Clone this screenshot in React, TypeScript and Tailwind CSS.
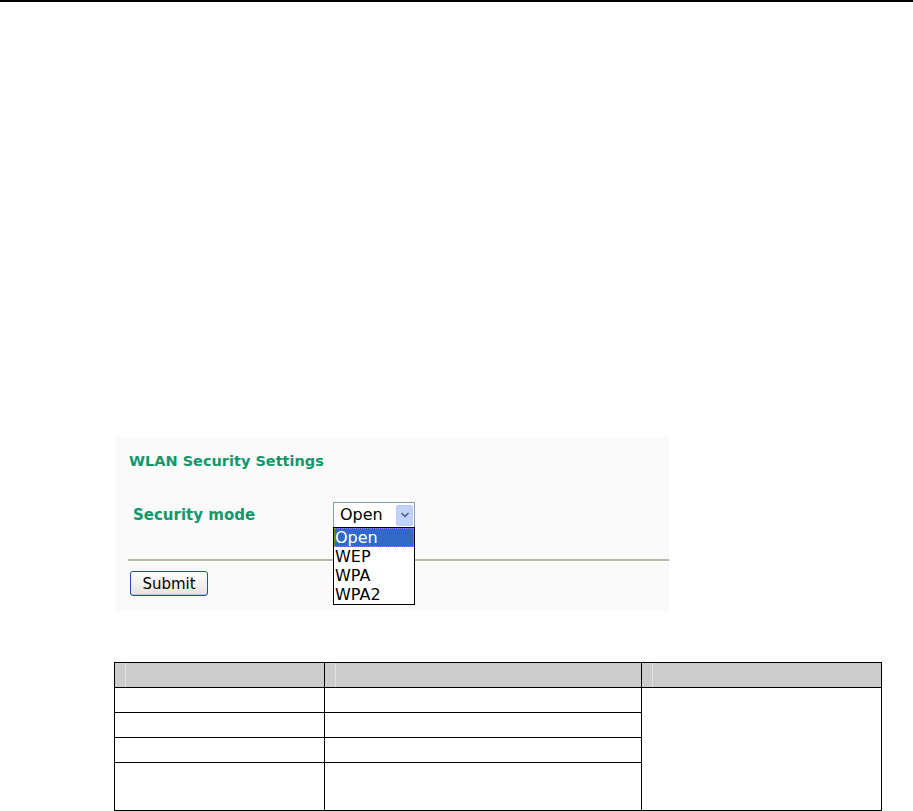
import { ChevronDown } from 'lucide-react';

const rows = [25, 25, 25, 48];

export default function App() {
  return (
    <div className="w-[913px] h-[811px] bg-white overflow-hidden font-['DejaVu_Sans',sans-serif]">
      {/* Page rule */}
      <div className="h-[2px] bg-black" />

      {/* Screenshot panel */}
      <div className="relative ml-[116px] mt-[435px] w-[553px] h-[174px] bg-[#fafafa]">
        <div className="pl-[13px] pt-[15px] text-[14.5px] leading-[18px] font-bold text-[#12976a]">
          WLAN Security Settings
        </div>

        <div className="flex items-center mt-[32px] h-[26px]">
          <div className="pl-[17px] w-[217px] text-[15px] font-bold text-[#12976a]">Security mode</div>
          <div className="relative w-[82px] h-[26px] bg-white border border-[#7f9db9] flex items-center">
            <span className="pl-[6px] flex-1 text-[16px] text-black">Open</span>
            <span className="mr-[1px] w-[17px] h-[21px] rounded-[2px] bg-[#c1d3fb] border border-[#b7cbf6] flex items-center justify-center">
              <ChevronDown className="w-[12px] h-[12px] text-[#4d6185]" strokeWidth={3.5} />
            </span>

            {/* Open dropdown */}
            <div className="absolute left-[-1px] top-[24px] w-[82px] bg-white border border-black z-10 text-[16px] leading-[19px] text-black">
              <div className="bg-[#316ac5] text-white pl-[1px] outline-1 outline-dotted outline-[#c49a30] -outline-offset-1">Open</div>
              <div className="pl-[1px]">WEP</div>
              <div className="pl-[1px]">WPA</div>
              <div className="pl-[1px]">WPA2</div>
            </div>
          </div>
        </div>

        <div className="ml-[12px] mt-[31px] h-[3px] border-t-2 border-[#bdb6a8] border-b border-b-[#ffffff]" />

        <button className="ml-[14px] mt-[9px] w-[78px] h-[25px] rounded-[3px] border border-[#1f4fa3] bg-gradient-to-b from-[#ffffff] to-[#e5e3da] text-[15px] leading-[20px] text-black shadow-[inset_0_-1px_0_#c3c8d6]">
          Submit
        </button>
      </div>

      {/* Table */}
      <table className="ml-[114px] mt-[51px] w-[767px] border-collapse table-fixed">
        <colgroup>
          <col className="w-[210px]" />
          <col className="w-[317px]" />
          <col className="w-[240px]" />
        </colgroup>
        <thead>
          <tr className="h-[25px]">
            {[0, 1, 2].map((i) => (
              <th key={i} className="border border-black bg-[#cccccc] p-0">
                <div className="h-[24px] ml-[10px] border-l border-[#e2e2e2]" />
              </th>
            ))}
          </tr>
        </thead>
        <tbody>
          {rows.map((h, i) => (
            <tr key={i} style={{ height: h }}>
              <td className="border border-black p-0" />
              <td className="border border-black p-0" />
              {i === 0 && <td rowSpan={4} className="border border-black p-0" />}
            </tr>
          ))}
        </tbody>
      </table>
    </div>
  );
}
